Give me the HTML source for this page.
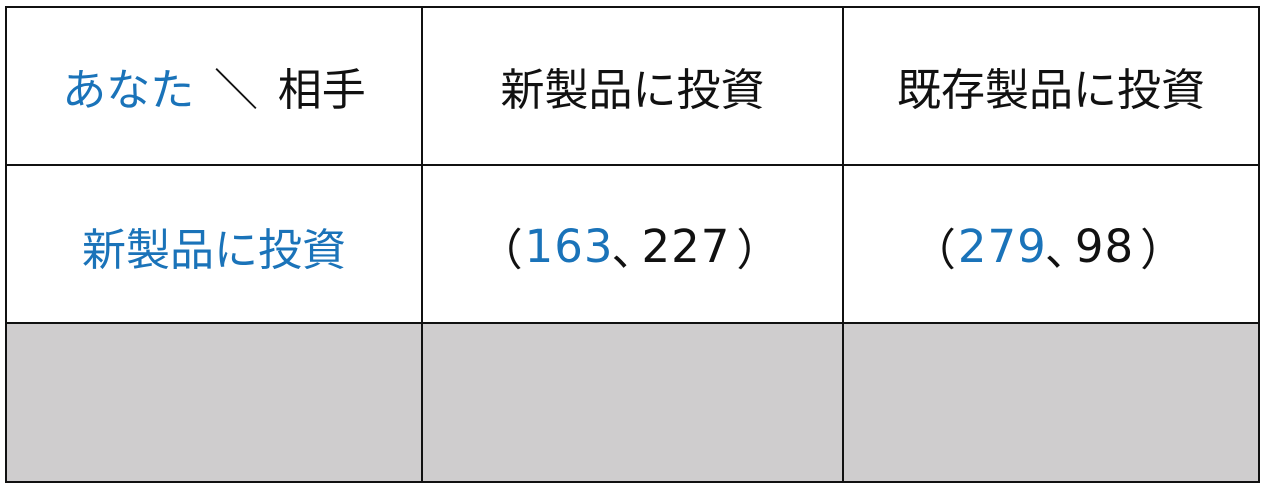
<!DOCTYPE html>
<html><head><meta charset="utf-8"><style>
body{margin:0;width:1268px;height:493px;background:#fff;position:relative;overflow:hidden;font-family:"Liberation Sans","Noto Sans CJK JP",sans-serif;}
.l{position:absolute;background:#111;}
.c{position:absolute;display:flex;align-items:center;justify-content:center;font-size:44px;color:#111;white-space:nowrap;font-family:"Noto Sans CJK JP",sans-serif;}
.b{color:#1a73b9;}
.n{font-family:"DejaVu Sans",sans-serif;font-size:45px;letter-spacing:1px;}
.cm{margin-right:-14px;margin-left:-2px;}
.pl{margin-right:2px;margin-left:-6px;}
.pr{margin-left:6px;}
</style></head><body>
<div style="position:absolute;left:6px;top:324px;width:1253px;height:158px;background:#cfcdce"></div>
<div class="l" style="left:5px;top:6px;width:1255px;height:2px"></div>
<div class="l" style="left:5px;top:164px;width:1255px;height:2px"></div>
<div class="l" style="left:5px;top:322px;width:1255px;height:2px"></div>
<div class="l" style="left:5px;top:481px;width:1255px;height:2px"></div>
<div class="l" style="left:5px;top:6px;width:2px;height:477px"></div>
<div class="l" style="left:421px;top:6px;width:2px;height:477px"></div>
<div class="l" style="left:842px;top:6px;width:2px;height:477px"></div>
<div class="l" style="left:1258px;top:6px;width:2px;height:477px"></div>
<div class="c" style="left:7px;top:8px;width:414px;height:156px"><span class="b">あなた</span>&nbsp;&nbsp;＼&nbsp;&nbsp;相手</div>
<div class="c" style="left:423px;top:8px;width:419px;height:156px">新製品に投資</div>
<div class="c" style="left:844px;top:8px;width:414px;height:156px">既存製品に投資</div>
<div class="c b" style="left:7px;top:168px;width:414px;height:156px">新製品に投資</div>
<div class="c" style="left:423px;top:168px;width:419px;height:156px"><span class="pl">（</span><span class="b n">163</span><span class="cm">、</span><span class="n">227</span><span class="pr">）</span></div>
<div class="c" style="left:844px;top:168px;width:414px;height:156px"><span class="pl">（</span><span class="b n">279</span><span class="cm">、</span><span class="n">98</span><span class="pr">）</span></div>
</body></html>
